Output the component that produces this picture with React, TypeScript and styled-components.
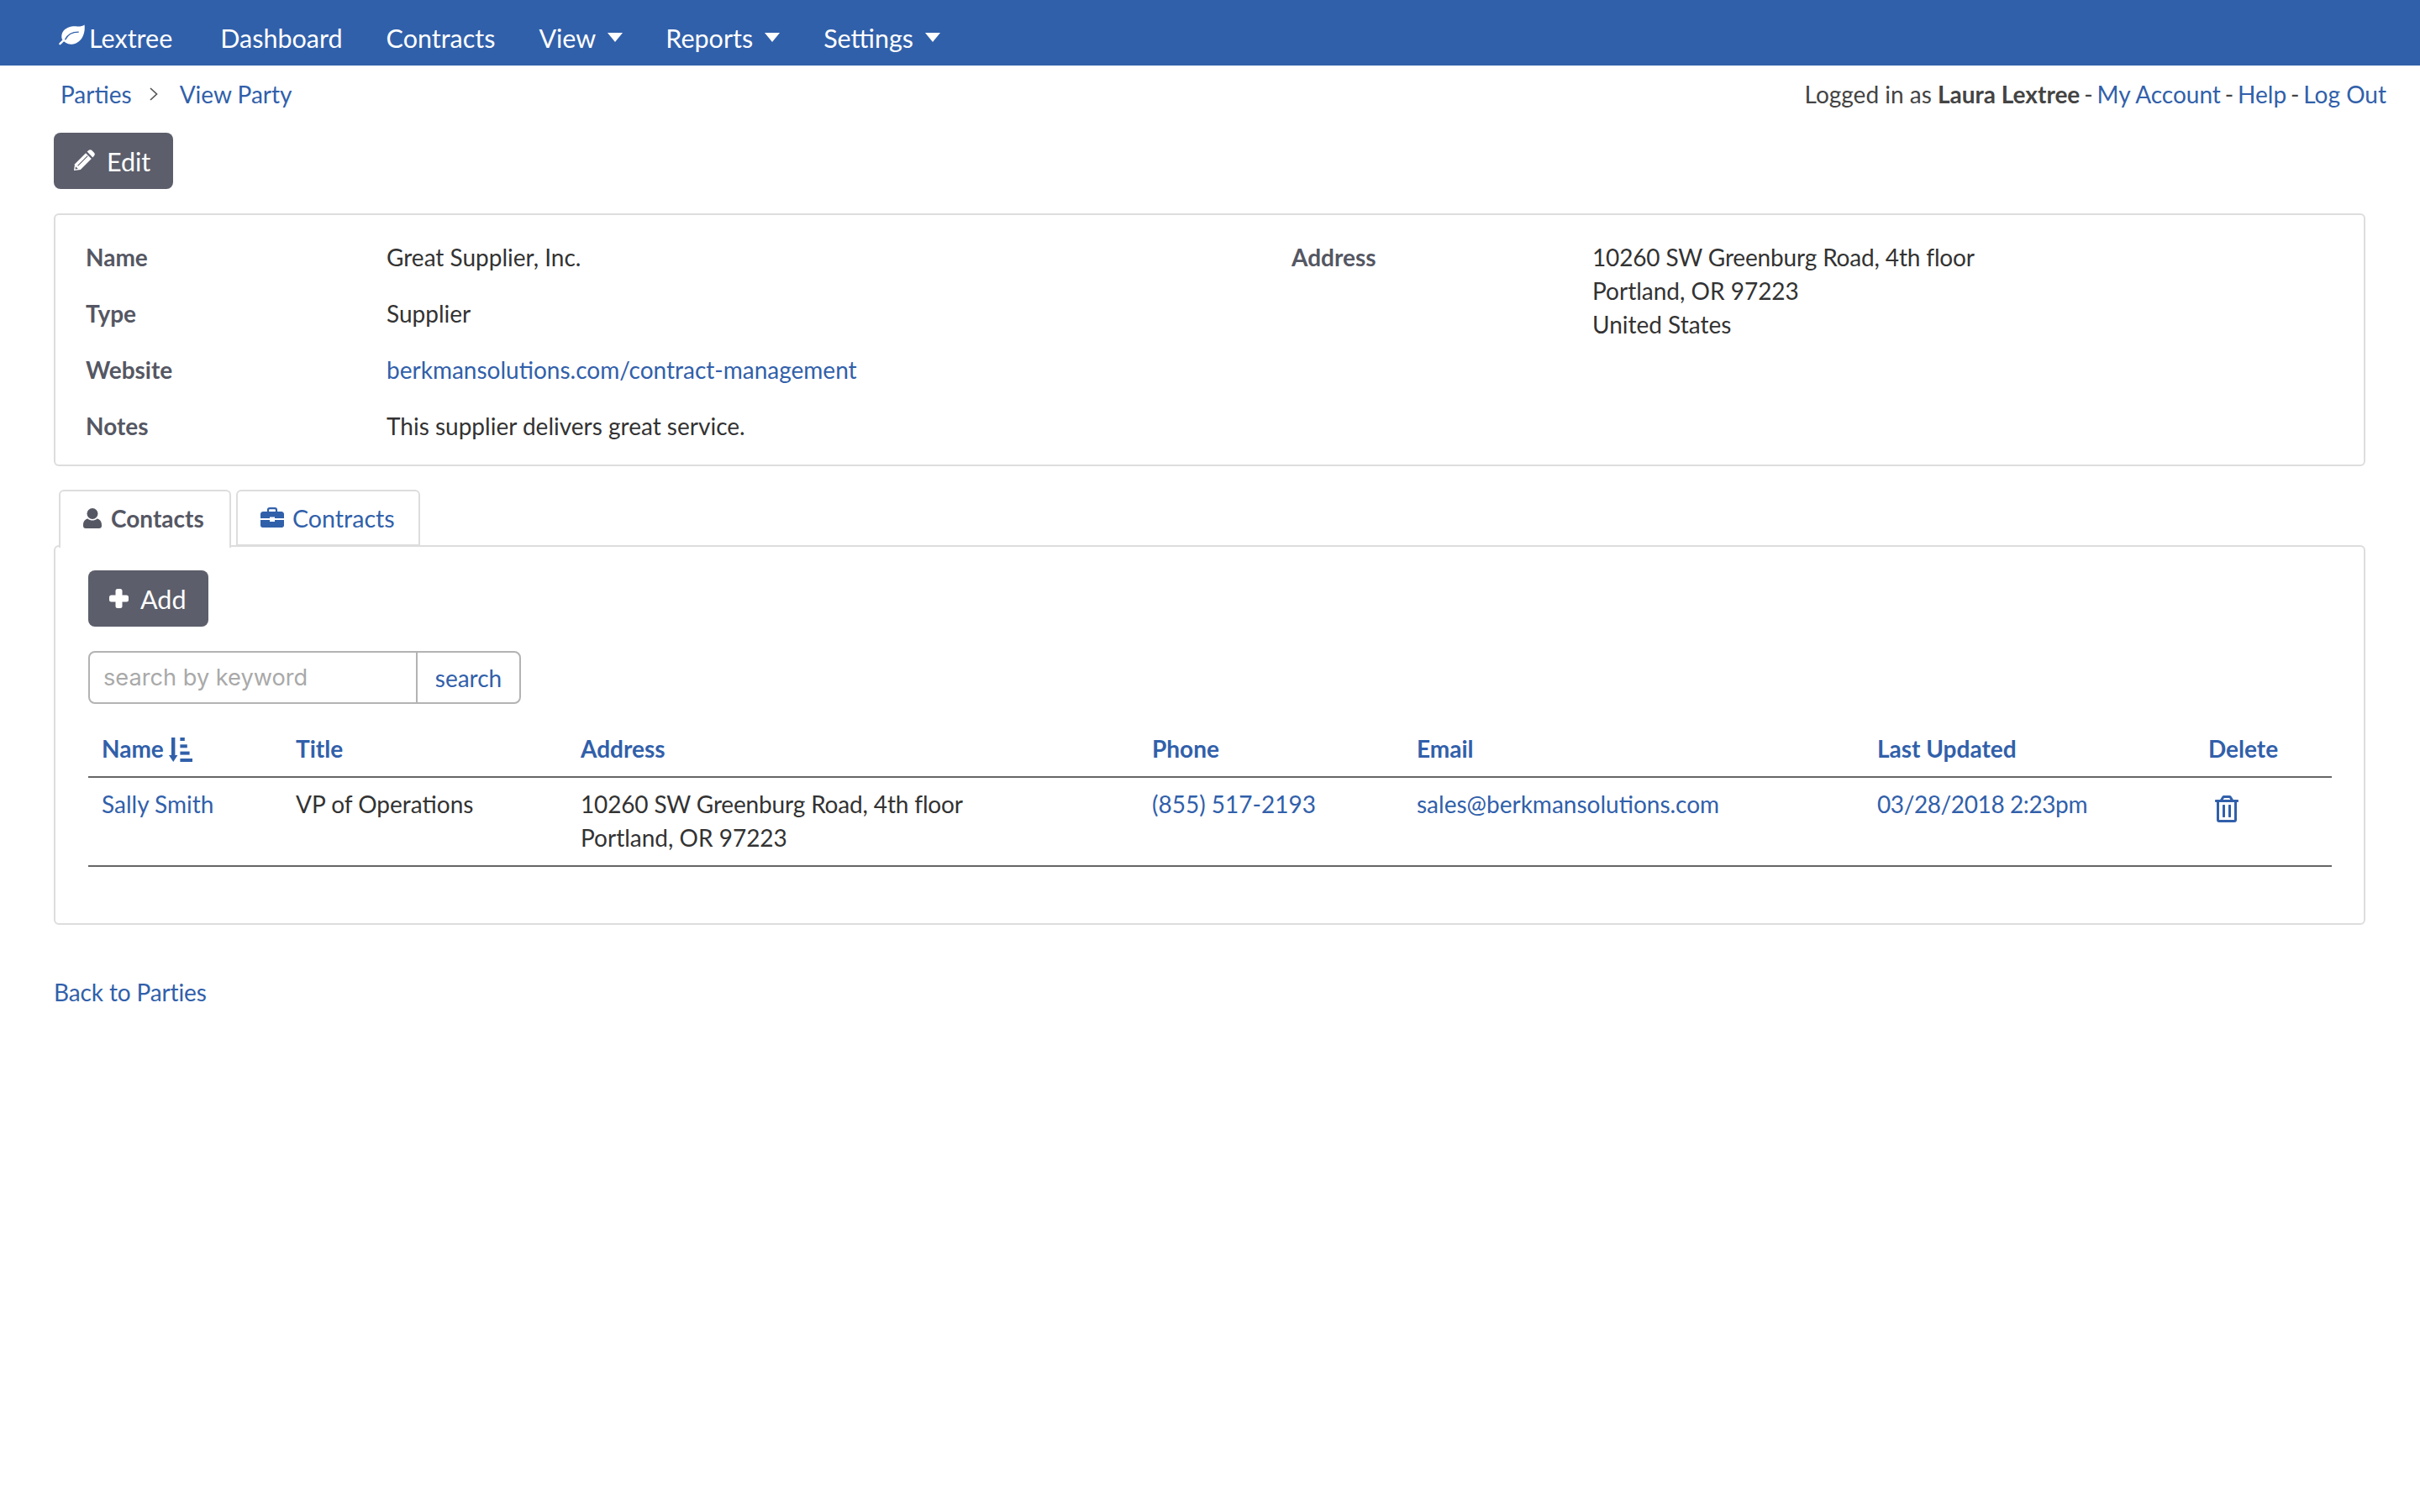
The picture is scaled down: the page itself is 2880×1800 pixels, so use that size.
import React from "react";
import styled, { createGlobalStyle } from "styled-components";
import { FaRegTrashAlt } from "react-icons/fa";

const LINK = "#3160aa";
const BTN = "#5c5e6b";
const LINE = "#dddddd";

const Global = createGlobalStyle`
  html, body { margin: 0; padding: 0; background: #fff; }
  body { font-family: Lato, "Open Sans", sans-serif; font-size: 28px; line-height: 40px; color: #444; }
  a { color: ${LINK}; text-decoration: none; }
`;

const Page = styled.div`
  width: 2880px;
  min-height: 1800px;
`;

const Navbar = styled.nav`
  box-sizing: border-box;
  height: 78px;
  background: ${LINK};
  display: flex;
  align-items: center;
  padding: 11px 0 0 70px;
  color: #fff;
  font-size: 30.5px;
`;

const Brand = styled.a`
  display: flex;
  align-items: center;
  gap: 4px;
  color: #fff;
  margin-right: 57px;
`;

const LeafIcon = styled.svg`
  width: 32px;
  height: 25px;
  margin-top: -6px;
`;

const NavLink = styled.a<{ $space: number }>`
  display: flex;
  align-items: center;
  color: #fff;
  margin-right: ${(p) => p.$space}px;
`;

const Caret = styled.span`
  width: 0;
  height: 0;
  margin-left: 14px;
  border-top: 11px solid #fff;
  border-left: 9.5px solid transparent;
  border-right: 9.5px solid transparent;
`;

const TopRow = styled.div`
  display: flex;
  justify-content: space-between;
  align-items: center;
  height: 40px;
  margin-top: 14px;
  padding: 0 40px 0 72px;
`;

const Crumbs = styled.div`
  display: flex;
  align-items: center;
`;

const CrumbArrow = styled.svg`
  width: 10px;
  height: 16px;
  margin: 0 26px 0 21px;
  fill: none;
  stroke: #555;
  stroke-width: 1.7;
`;

const Strong = styled.b`
  font-weight: 700;
`;

const Dash = styled.span`
  margin: 0 -2.3px;
`;

const Content = styled.main`
  padding: 26px 65px 0 64px;
`;

const DarkButton = styled.button`
  display: flex;
  align-items: center;
  gap: 14px;
  height: 67px;
  padding: 0 27px 0 24px;
  background: ${BTN};
  border: 0;
  border-radius: 8px;
  color: #fff;
  font: inherit;
  font-size: 30.5px;
`;

const PencilIcon = styled.svg`
  width: 25px;
  height: 25px;
  margin-bottom: 2px;
`;

const Card = styled.section`
  margin-top: 29px;
  height: 301px;
  box-sizing: border-box;
  border: 2px solid ${LINE};
  border-radius: 6px;
  display: grid;
  grid-template-columns: 1435px 1fr;
  padding: 30px 0 0 36px;
`;

const FieldList = styled.div`
  display: flex;
  flex-direction: column;
  gap: 27px;
`;

const FieldRow = styled.div`
  display: flex;
`;

const FieldLabel = styled.div`
  width: 358px;
  flex: none;
  font-weight: 700;
  color: #555763;
`;

const FieldValue = styled.div`
  color: #333;
`;

const AddressText = styled.span`
  letter-spacing: -0.16px;
`;

const Tabs = styled.div`
  display: flex;
  gap: 6px;
  margin-top: 28px;
  padding-left: 6px;
  position: relative;
  z-index: 1;
`;

const Tab = styled.a<{ $active?: boolean; $width: number }>`
  display: flex;
  align-items: center;
  gap: ${(p) => (p.$active ? 11 : 10)}px;
  box-sizing: border-box;
  width: ${(p) => p.$width}px;
  height: ${(p) => (p.$active ? 69 : 67)}px;
  margin-bottom: ${(p) => (p.$active ? -2 : 0)}px;
  padding: 0 0 ${(p) => (p.$active ? 4 : 0)}px 27px;
  border: 2px solid ${LINE};
  border-bottom: ${(p) => (p.$active ? "0" : `2px solid ${LINE}`)};
  border-radius: 6px 6px 0 0;
  background: #fff;
  color: ${(p) => (p.$active ? "#555763" : LINK)};
  font-weight: ${(p) => (p.$active ? 700 : 400)};
  font-size: ${(p) => (p.$active ? 28 : 28.6)}px;
`;

const UserIcon = styled.svg`
  width: 22px;
  height: 24px;
  fill: #555763;
`;

const CaseIcon = styled.svg`
  width: 28px;
  height: 24px;
  margin-bottom: 2px;
  fill: ${LINK};
`;

const Panel = styled.section`
  box-sizing: border-box;
  height: 452px;
  margin-top: -1px;
  border: 2px solid ${LINE};
  border-radius: 6px;
  padding: 28px 38px 0 39px;
`;

const AddButton = styled(DarkButton)`
  padding: 0 27px 0 25px;
`;

const PlusIcon = styled.svg`
  width: 23px;
  height: 23px;
  fill: #fff;
`;

const SearchBox = styled.form`
  display: flex;
  width: 515px;
  height: 63px;
  margin-top: 29px;
  box-sizing: border-box;
  border: 2px solid #b3b3b3;
  border-radius: 8px;
`;

const SearchInput = styled.input`
  width: 390px;
  box-sizing: border-box;
  border: 0;
  border-right: 2px solid #b3b3b3;
  background: transparent;
  padding: 0 16px;
  font-family: Inter, "Liberation Sans", sans-serif;
  font-size: 27.2px;
  color: #444;
  outline: none;
  &::placeholder { color: #a9a9a9; opacity: 1; }
`;

const SearchButton = styled.button`
  flex: 1;
  border: 0;
  background: transparent;
  color: ${LINK};
  font: inherit;
  padding: 0;
`;

const Table = styled.table`
  width: 2670px;
  table-layout: fixed;
  border-collapse: collapse;
  margin-top: 23px;
`;

const Th = styled.th`
  height: 64px;
  box-sizing: border-box;
  padding: 0 16px 4px;
  text-align: left;
  font-weight: 700;
  color: ${LINK};
  border-bottom: 2px solid #666;
`;

const SortIcon = styled.svg`
  width: 28px;
  height: 29px;
  margin-left: 6px;
  vertical-align: -5px;
  fill: ${LINK};
`;

const Td = styled.td`
  padding: 11px 16px 13px;
  vertical-align: top;
  color: #333;
  border-bottom: 2px solid #666;
`;

const DateLink = styled.a`
  letter-spacing: -0.4px;
`;

const Trash = styled(FaRegTrashAlt)`
  display: block;
  width: 28px;
  height: 32px;
  margin: 10px 0 0 8px;
  color: ${LINK};
`;

const BackLink = styled.a`
  display: block;
  margin-top: 60px;
  letter-spacing: -0.13px;
`;

const cols = [231, 339, 680, 315, 548, 394, 163];

export default function App() {
  return (
    <Page>
      <Global />
      <Navbar>
        <Brand href="#">
          <LeafIcon viewBox="9 9 33 25">
            <path fill="#fff" d="M13 27C10 15 22 10 30 11C34 11.5 38 11 40.5 9C42 21 36 32 25 33C20 33.5 16 31 13 27Z" />
            <path fill="none" stroke="#fff" strokeWidth="2.4" strokeLinecap="round" d="M10.5 32.5L16 27" />
            <path fill="none" stroke={LINK} strokeWidth="1.4" strokeLinecap="round" d="M17 27C20 21 26 18 33 18" />
          </LeafIcon>
          Lextree
        </Brand>
        <NavLink href="#" $space={52}>Dashboard</NavLink>
        <NavLink href="#" $space={52}>Contracts</NavLink>
        <NavLink href="#" $space={51}>View<Caret /></NavLink>
        <NavLink href="#" $space={52}>Reports<Caret /></NavLink>
        <NavLink href="#" $space={0}>Settings<Caret /></NavLink>
      </Navbar>
      <TopRow>
        <Crumbs>
          <a href="#">Parties</a>
          <CrumbArrow viewBox="0 0 10 16"><polyline points="1,1 8.5,8 1,15" /></CrumbArrow>
          <a href="#">View Party</a>
        </Crumbs>
        <div>
          Logged in as <Strong>Laura Lextree</Strong> <Dash>-</Dash> <a href="#">My Account</a> <Dash>-</Dash> <a href="#">Help</a> <Dash>-</Dash> <a href="#">Log Out</a>
        </div>
      </TopRow>
      <Content>
        <DarkButton>
          <PencilIcon viewBox="0 0 24 24">
            <path fill="#fff" d="M15 2.5L17 .8C17.9 0 19.3 0 20.2 .8L23.2 3.8C24 4.7 24 6 23.2 7L21.5 9Z" />
            <path fill="#fff" d="M13.5 4L20 10.5L7.5 23L0 24L1 16.5Z" />
            <path fill="none" stroke={BTN} strokeWidth="1" d="M4.4 18.6L15.6 7.4" />
            <path fill={BTN} d="M2 19.4L4.6 22L1.4 22.6Z" />
          </PencilIcon>
          Edit
        </DarkButton>
        <Card>
          <FieldList>
            <FieldRow><FieldLabel>Name</FieldLabel><FieldValue>Great Supplier, Inc.</FieldValue></FieldRow>
            <FieldRow><FieldLabel>Type</FieldLabel><FieldValue>Supplier</FieldValue></FieldRow>
            <FieldRow><FieldLabel>Website</FieldLabel><FieldValue><a href="#">berkmansolutions.com/contract-management</a></FieldValue></FieldRow>
            <FieldRow><FieldLabel>Notes</FieldLabel><FieldValue>This supplier delivers great service.</FieldValue></FieldRow>
          </FieldList>
          <FieldRow>
            <FieldLabel>Address</FieldLabel>
            <FieldValue><AddressText>10260 SW Greenburg Road, 4th floor</AddressText><br />Portland, OR 97223<br />United States</FieldValue>
          </FieldRow>
        </Card>
        <Tabs>
          <Tab href="#" $active $width={205}>
            <UserIcon viewBox="0 0 22 24">
              <circle cx="11" cy="6.5" r="6.5" />
              <path d="M0 20C0 15.5 2.5 13 5.5 12.5C7 14 9 14.6 11 14.6C13 14.6 15 14 16.5 12.5C19.5 13 22 15.5 22 20V21C22 22.8 20.8 24 19 24H3C1.2 24 0 22.8 0 21Z" />
            </UserIcon>
            Contacts
          </Tab>
          <Tab href="#" $width={219}>
            <CaseIcon viewBox="0 0 28 24">
              <path fill="none" stroke={LINK} strokeWidth="2.2" d="M9 6V3C9 2 10 1.1 11 1.1H17C18 1.1 19 2 19 3V6" />
              <path d="M0 8C0 6.4 1.4 5 3 5H25C26.6 5 28 6.4 28 8V13H17V11.5H11V13H0Z" />
              <path d="M0 15H11V17H17V15H28V21.5C28 23 26.8 24 25.5 24H2.5C1.2 24 0 23 0 21.5Z" />
            </CaseIcon>
            Contracts
          </Tab>
        </Tabs>
        <Panel>
          <AddButton>
            <PlusIcon viewBox="0 0 23 23">
              <rect x="7.5" y="0" width="8" height="23" rx="2.5" />
              <rect x="0" y="7.5" width="23" height="8" rx="2.5" />
            </PlusIcon>
            Add
          </AddButton>
          <SearchBox>
            <SearchInput placeholder="search by keyword" />
            <SearchButton type="button">search</SearchButton>
          </SearchBox>
          <Table>
            <colgroup>{cols.map((w, i) => <col key={i} style={{ width: w }} />)}</colgroup>
            <thead>
              <tr>
                <Th>
                  Name
                  <SortIcon viewBox="0 0 28 29">
                    <rect x="3" y="0" width="4.4" height="23" />
                    <polygon points="0,21 10.4,21 5.2,29" />
                    <rect x="13.4" y="0" width="5.4" height="4" />
                    <rect x="13.4" y="8.3" width="8.4" height="4" />
                    <rect x="13.4" y="16.6" width="11.2" height="4" />
                    <rect x="13.4" y="25" width="14.6" height="4" />
                  </SortIcon>
                </Th>
                <Th>Title</Th>
                <Th>Address</Th>
                <Th>Phone</Th>
                <Th>Email</Th>
                <Th>Last Updated</Th>
                <Th>Delete</Th>
              </tr>
            </thead>
            <tbody>
              <tr>
                <Td><a href="#">Sally Smith</a></Td>
                <Td>VP of Operations</Td>
                <Td><AddressText>10260 SW Greenburg Road, 4th floor</AddressText><br />Portland, OR 97223</Td>
                <Td><a href="#">(855) 517-2193</a></Td>
                <Td><a href="#">sales@berkmansolutions.com</a></Td>
                <Td><DateLink href="#">03/28/2018 2:23pm</DateLink></Td>
                <Td><Trash /></Td>
              </tr>
            </tbody>
          </Table>
        </Panel>
        <BackLink href="#">Back to Parties</BackLink>
      </Content>
    </Page>
  );
}
